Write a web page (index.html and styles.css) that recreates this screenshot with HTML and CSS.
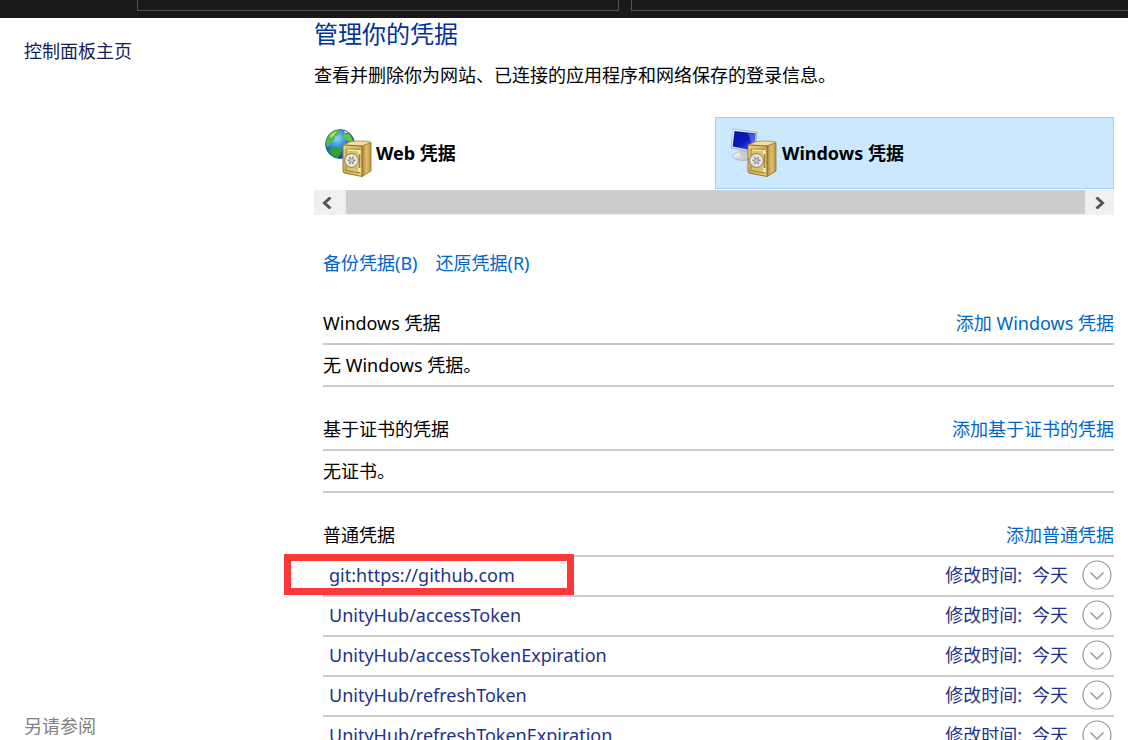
FILE: index.html
```html
<!DOCTYPE html>
<html lang="zh-CN">
<head>
<meta charset="utf-8">
<title>凭据管理器</title>
<link rel="stylesheet" href="styles.css">
</head>
<body>
<svg class="defs" aria-hidden="true">
  <defs>
    <linearGradient id="gold" x1="0" y1="0" x2="1" y2="1"><stop offset="0" stop-color="#f0da8c"/><stop offset=".5" stop-color="#d0ac50"/><stop offset="1" stop-color="#e6cc78"/></linearGradient>
    <linearGradient id="goldSide" x1="0" y1="0" x2="1" y2="0"><stop offset="0" stop-color="#a88630"/><stop offset=".5" stop-color="#dcc070"/><stop offset="1" stop-color="#b89440"/></linearGradient>
    <radialGradient id="sea" cx=".4" cy=".3" r=".75"><stop offset="0" stop-color="#8fd8fa"/><stop offset=".45" stop-color="#2d86d8"/><stop offset="1" stop-color="#0b3490"/></radialGradient>
    <linearGradient id="screen" x1="0" y1="0" x2="1" y2="1"><stop offset="0" stop-color="#0a14a0"/><stop offset=".5" stop-color="#0a18c0"/><stop offset="1" stop-color="#4468ea"/></linearGradient>
    <linearGradient id="silver" x1="0" y1="0" x2="1" y2="1"><stop offset="0" stop-color="#ffffff"/><stop offset="1" stop-color="#aab2b8"/></linearGradient>
    <symbol id="safe" viewBox="0 0 30 38">
      <path d="M1 5 9 1.500Q18 .5 28 1.500L29 3 21 6Z" fill="#f2e0a0" stroke="#ad8b3b" stroke-width=".8"/>
      <path d="M20 6 29 2.500V31L20 36.500Z" fill="url(#goldSide)" stroke="#92712b" stroke-width=".8"/>
      <path d="M1 5 20 6V36.500L2 33Q1 32 1 31Z" fill="url(#gold)" stroke="#92712b" stroke-width=".9"/>
      <path d="M4 9 17.500 9.500V33L4 30.500Z" fill="#dcc06a" stroke="#9b7a2f" stroke-width=".9"/>
      <path d="M5 10 16.500 10.500V13" fill="none" stroke="#fff0b8"/>
      <path d="M17.500 10V14M17.500 28V32" stroke="#f5f2df" stroke-width="2"/>
      <circle cx="9.500" cy="20.500" r="7" fill="#d5d4ca" stroke="#8c8775" stroke-width="1"/>
      <circle cx="9.500" cy="20.500" r="4.800" fill="#9a988e" stroke="#f6f6ee" stroke-width="1.300"/>
      <path d="M9.500 15V26M4.800 17.800 14.200 23.200M4.800 23.200 14.200 17.800" stroke="#f1f2ef" stroke-width="1.300"/>
      <circle cx="9.500" cy="20.500" r="2" fill="#c9ced1" stroke="#77796f" stroke-width=".6"/>
    </symbol>
    <symbol id="web" viewBox="0 0 48 50">
      <circle cx="16" cy="16" r="14.500" fill="url(#sea)" stroke="#2355a0" stroke-width=".7"/>
      <path d="M4 9Q7 3 13 2L16 4 14 7 11 8 10 12 7 13 6 17 3 19 2 15Q2 12 4 9Z" fill="#5cba3e"/>
      <path d="M8 19 13 19 18 22 16 27 13 30Q7 28 5 23Z" fill="#32a334"/>
      <path d="M20 6 25 6Q29 10 29 15L26 14 23 12 19 10Z" fill="#66c444"/>
      <path d="M6 8Q9 4 13 3L11 6 7 10Z" fill="#b6e67c"/>
      <path d="M20 3Q22 3 24 5L21 5Z" fill="#e5faff"/>
      <use href="#safe" x="18" y="12" width="30" height="38"/>
    </symbol>
    <symbol id="pc" viewBox="0 0 48 50">
      <ellipse cx="13" cy="28" rx="10" ry="4.500" fill="url(#silver)" stroke="#9ba3aa" stroke-width=".6"/>
      <path d="M10 21 17 22 18 28Q13 30 10 27Z" fill="#c5cbd0"/>
      <path d="M3 1 27 4 25 25 1 20Z" fill="url(#silver)" stroke="#9fb2c8" stroke-width=".8"/>
      <path d="M4.500 3 25.500 5.500 23.800 22.500 2.700 18.500Z" fill="url(#screen)"/>
      <path d="M18 5 25 6 24 22Z" fill="#7593f4" opacity=".5"/>
      <use href="#safe" x="17" y="12" width="30" height="38"/>
    </symbol>
    <symbol id="expand" viewBox="0 0 30 30">
      <circle cx="15" cy="15" r="14" fill="#fff" stroke="#989898" stroke-width="1.200"/>
      <path d="M8.500 12.500 15 19 21.500 12.500" fill="none" stroke="#989898" stroke-width="1.500"/>
    </symbol>
  </defs>
</svg>
<header class="titlebar">
  <div class="field field-address"></div>
  <div class="field field-search"></div>
</header>
<div class="window">
  <aside class="sidebar">
    <a class="home" href="#">控制面板主页</a>
    <span class="see-also">另请参阅</span>
  </aside>
  <main class="main">
    <h1 class="title">管理你的凭据</h1>
    <p class="intro">查看并删除你为网站、已连接的应用程序和网络保存的登录信息。</p>
    <div class="tiles">
      <button class="tile" type="button"><svg class="tile-icon" aria-hidden="true"><use href="#web"/></svg>Web 凭据</button>
      <button class="tile tile-selected" type="button"><svg class="tile-icon" aria-hidden="true"><use href="#pc"/></svg>Windows 凭据</button>
    </div>
    <div class="scrollbar">
      <button class="scroll-button scroll-left" type="button" aria-label="向左滚动"><svg class="arrow" viewBox="0 0 10 12"><path d="M8.500 .5 2.500 6 8.500 11.500"/></svg></button>
      <div class="thumb"></div>
      <button class="scroll-button" type="button" aria-label="向右滚动"><svg class="arrow" viewBox="0 0 10 12"><path d="M1.500 .5 7.500 6 1.500 11.500"/></svg></button>
    </div>
    <div class="vault">
      <nav class="actions"><a href="#">备份凭据(B)</a><a href="#">还原凭据(R)</a></nav>
      <section class="group">
        <div class="group-head"><h2>Windows 凭据</h2><a href="#">添加 Windows 凭据</a></div>
        <p class="empty">无 Windows 凭据。</p>
      </section>
      <section class="group">
        <div class="group-head"><h2>基于证书的凭据</h2><a href="#">添加基于证书的凭据</a></div>
        <p class="empty">无证书。</p>
      </section>
      <section class="group">
        <div class="group-head"><h2>普通凭据</h2><a href="#">添加普通凭据</a></div>
        <ul class="list">
          <li class="item item-marked"><span class="name">git:https://github.com</span><span class="time">修改时间:</span><span class="day">今天</span><button class="expander" type="button" aria-label="展开"><svg><use href="#expand"/></svg></button></li>
          <li class="item"><span class="name">UnityHub/accessToken</span><span class="time">修改时间:</span><span class="day">今天</span><button class="expander" type="button" aria-label="展开"><svg><use href="#expand"/></svg></button></li>
          <li class="item"><span class="name">UnityHub/accessTokenExpiration</span><span class="time">修改时间:</span><span class="day">今天</span><button class="expander" type="button" aria-label="展开"><svg><use href="#expand"/></svg></button></li>
          <li class="item"><span class="name">UnityHub/refreshToken</span><span class="time">修改时间:</span><span class="day">今天</span><button class="expander" type="button" aria-label="展开"><svg><use href="#expand"/></svg></button></li>
          <li class="item"><span class="name">UnityHub/refreshTokenExpiration</span><span class="time">修改时间:</span><span class="day">今天</span><button class="expander" type="button" aria-label="展开"><svg><use href="#expand"/></svg></button></li>
        </ul>
      </section>
    </div>
  </main>
</div>
</body>
</html>
```
FILE: styles.css
```css
*, *::after { box-sizing: border-box; }

body {
  margin: 0;
  height: 100vh;
  display: flex;
  flex-direction: column;
  overflow: hidden;
  background: #fff;
  color: #000;
  font: 18px/24px "Noto Sans", "Noto Sans CJK SC", sans-serif;
}

h1, h2, p, ul { margin: 0; padding: 0; font-size: inherit; font-weight: 400; }
a { color: #0066cc; text-decoration: none; }
button { border: 0; padding: 0; background: none; color: inherit; font: inherit; }

.defs { position: absolute; width: 0; height: 0; }

.titlebar {
  flex: none;
  display: flex;
  gap: 12px;
  height: 18px;
  padding-left: 137px;
  background: #191919;
}
.field { height: 11px; border: 1px solid #535353; border-top: 0; }
.field-address { flex: 481; }
.field-search { flex: 498; border-right: 0; }

.window { flex: 1; min-height: 0; display: flex; }

.sidebar {
  flex: none;
  width: 314px;
  display: flex;
  flex-direction: column;
  justify-content: space-between;
  padding: 21px 24px 2px;
}
.home { color: #151c55; }
.see-also { color: #808080; }

.main { flex: 1; min-width: 0; padding-right: 14px; }
.title { font-size: 24px; line-height: 32px; color: #003399; }
.intro { margin-top: 13px; }

.tiles { display: grid; grid-template-columns: 1fr 1fr; gap: 2px; margin-top: 30px; }
.tile {
  display: flex;
  align-items: center;
  gap: 4px;
  height: 72px;
  padding-left: 9px;
  border: 1px solid transparent;
  font-weight: 700;
}
.tile-selected { padding-left: 14px; border-color: #99d1ff; background: #cce8ff; }
.tile-icon { width: 48px; height: 50px; }

.scrollbar { display: flex; height: 25px; margin-top: 1px; background: #f0f0f0; }
.thumb { flex: 1; height: 24px; background: #cdcdcd; }
.scroll-button { width: 29px; display: flex; align-items: center; justify-content: center; }
.scroll-left { width: 32px; padding-right: 7px; }
.arrow { width: 10px; height: 12px; fill: none; stroke: #555; stroke-width: 3; }

.vault { padding-left: 9px; }
.actions { display: flex; gap: 18px; margin-top: 36px; }
.group { margin-top: 22px; }
.actions + .group { margin-top: 28px; }
.group-head, .empty {
  display: flex;
  align-items: center;
  justify-content: space-between;
  height: 42px;
  border-bottom: 2px solid #cbcbcb;
}

.list { list-style: none; }
.item {
  position: relative;
  display: flex;
  align-items: center;
  height: 40px;
  padding: 0 2px 2px 6px;
  border-bottom: 2px solid #cbcbcb;
  color: #1e3287;
}
.item-marked::after {
  content: "";
  position: absolute;
  left: -39px;
  top: -3px;
  width: 290px;
  height: 41px;
  border: 7px solid #fc3838;
}
.name { flex: 1; }
.day { margin: 0 14px 0 10px; }
.expander, .expander svg { display: block; width: 30px; height: 30px; }
```
